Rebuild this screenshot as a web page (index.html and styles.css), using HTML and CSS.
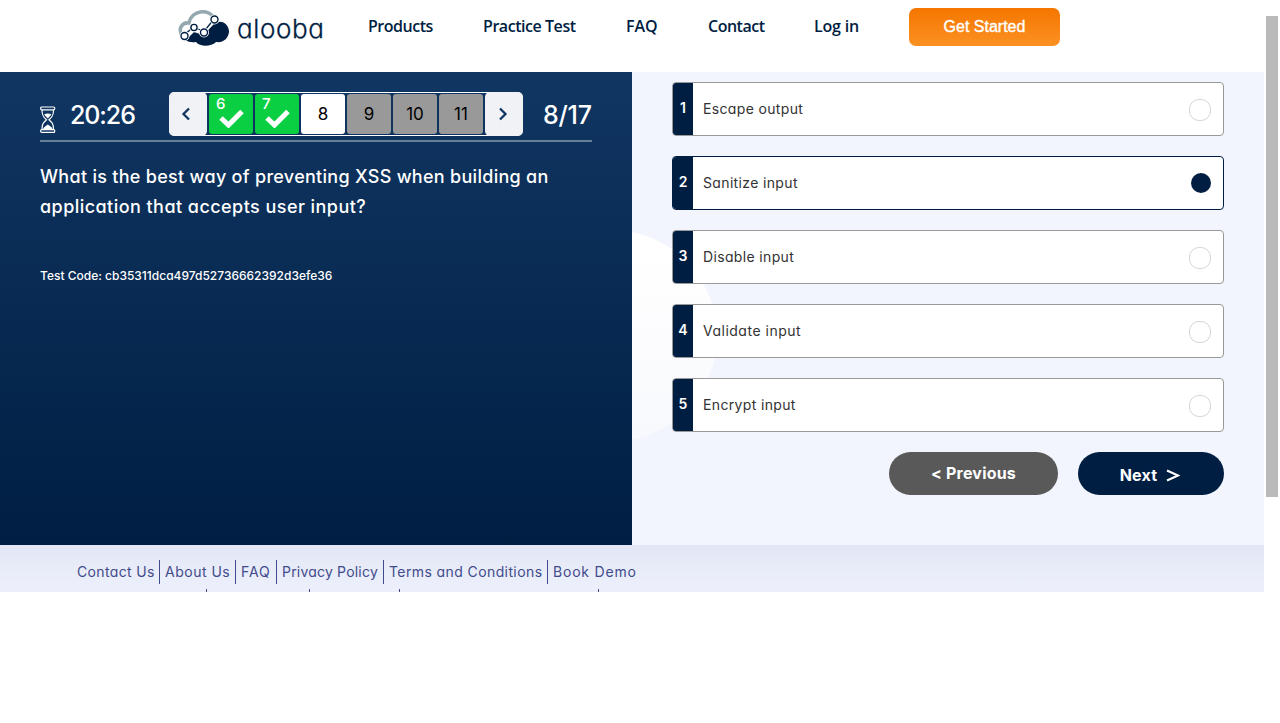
FILE: index.html
```html
<!DOCTYPE html>
<html lang="en">
<head>
<meta charset="utf-8">
<title>Alooba test</title>
<link rel="stylesheet" href="styles.css">
</head>
<body>
<div class="page">
  <header class="header">
    <a class="logo">
      <svg class="logo-mark" width="52" height="38" viewBox="0 0 52 38">
        <path d="M5 29C-1 21 4 14 11 15C13 3 30-1 37 11" fill="none" stroke="#93a8af" stroke-width="3.500"/>
        <path d="M9 31L16 24L25 27L35 17C42 10 51 15 51 24C50 31 45 35 38 34C33 39 22 39 18 34Q12 35 7 32Z" fill="#001e42"/>
        <path d="M6 27L15.500 19L26 23.500L36 11" fill="none" stroke="#fff" stroke-width="4.500"/>
        <path d="M6 27L15.500 19L26 23.500L36 11" fill="none" stroke="#001e42" stroke-width="1.300"/>
        <g fill="#fff" stroke="#fff" stroke-width="3"><circle cx="6.500" cy="28" r="3.500"/><circle cx="16" cy="19.500" r="3.300"/><circle cx="26" cy="24.500" r="3.500"/><circle cx="36.500" cy="11.500" r="3.500"/></g>
        <g fill="#fff" stroke="#001e42" stroke-width="1.400"><circle cx="6.500" cy="28" r="3.500"/><circle cx="16" cy="19.500" r="3.100"/><circle cx="26" cy="24.500" r="3.500"/><circle cx="36.500" cy="11.500" r="3.500"/></g>
      </svg>
      <span class="logo-name">alooba</span>
    </a>
    <nav class="nav">
      <a class="n1">Products</a><a class="n2">Practice Test</a><a class="n3">FAQ</a><a class="n4">Contact</a><a class="n5">Log in</a>
    </nav>
    <button class="cta">Get Started</button>
  </header>

  <main class="main">
    <section class="question-panel">
      <div class="toolbar">
        <svg class="hourglass" width="16" height="28" viewBox="0 0 16 28" fill="none" stroke="#fff" stroke-width="1.200">
          <rect x="0.700" y="1" width="14" height="2.800" rx="1"/><rect x="0.700" y="23.600" width="14" height="2.800" rx="1"/>
          <path d="M2 4C2 9 3 11 6.500 13.700C3 17 2 18 2 23.500M13.500 4C13.500 9 12.500 11 9 13.700C12.500 17 13.500 18 13.500 23.500"/>
          <path d="M4 8.500Q8 6.500 11.500 8.500L7.800 12.500ZM3 23C4 20.500 6 20 7.800 18.500C9.500 20 12 20.500 12.500 23Z" fill="#fff" stroke="none"/>
        </svg>
        <span class="timer">20:26</span>
        <div class="pager">
          <button class="arrow prev"><svg width="10" height="14" viewBox="0 0 10 14"><path d="M8 1.500L2.500 7L8 12.500"/></svg></button>
          <div class="step done"><span>6</span><svg width="25" height="19" viewBox="0 0 25 19"><path d="M2 9L9.500 16L23 2.500"/></svg></div>
          <div class="step done"><span>7</span><svg width="25" height="19" viewBox="0 0 25 19"><path d="M2 9L9.500 16L23 2.500"/></svg></div>
          <div class="step current">8</div>
          <div class="step">9</div>
          <div class="step">10</div>
          <div class="step">11</div>
          <button class="arrow"><svg width="10" height="14" viewBox="0 0 10 14"><path d="M2 1.500L7.500 7L2 12.500"/></svg></button>
        </div>
        <span class="progress">8/17</span>
      </div>
      <h1 class="question"><span class="q1">What is the best way of preventing XSS when building an</span><br><span class="q2">application that accepts user input?</span></h1>
      <p class="code">Test Code: cb35311dca497d52736662392d3efe36</p>
    </section>

    <section class="answers">
      <div class="option"><b>1</b><span class="label">Escape output</span><i class="radio"></i></div>
      <div class="option selected"><b>2</b><span class="label">Sanitize input</span><i class="radio"></i></div>
      <div class="option"><b>3</b><span class="label">Disable input</span><i class="radio"></i></div>
      <div class="option"><b>4</b><span class="label wide">Validate input</span><i class="radio"></i></div>
      <div class="option"><b>5</b><span class="label">Encrypt input</span><i class="radio"></i></div>
      <div class="actions">
        <button class="previous">&lt; Previous</button>
        <button class="next"><span>Next</span><svg width="14" height="13" viewBox="0 0 14 13"><path d="M1 1.500L12 6.500L1 11.500"/></svg></button>
      </div>
    </section>
  </main>

  <footer class="footer">
    <div class="links">
      <a class="f1">Contact Us</a><a class="f2">About Us</a><a class="f3">FAQ</a><a class="f4">Privacy Policy</a><a class="f5">Terms and Conditions</a><a class="f6">Book Demo</a>
    </div>
    <div class="links second"><a class="s1"></a><a class="s2"></a><a class="s3"></a><a class="s4"></a><a></a></div>
  </footer>
</div>
<div class="scrollbar"></div>
</body>
</html>
```
FILE: styles.css
```css
* { box-sizing: border-box; }
body { margin: 0; height: 723px; overflow: hidden; background: #fff; display: flex; font-family: Inter, sans-serif; font-feature-settings: "cv11"; }
button { border: 0; padding: 0; font: inherit; }
a, span { white-space: nowrap; }
.page { width: 1264px; flex: none; }
.scrollbar { width: 12px; height: 481px; margin: 16px 0 0 2px; background: #bababa; }

.header { height: 72px; padding: 8px 0 0 178px; display: flex; align-items: flex-start; color: #001e42; }
.logo { width: 190px; display: flex; }
.logo-name { margin-left: 7px; font-size: 26px; font-weight: 300; line-height: 42px; letter-spacing: 0.6px; -webkit-text-stroke: 0.3px #001e42; }
.nav { width: 541px; display: flex; font: 600 16px/37px "Open Sans", sans-serif; }
.n1 { width: 115px; letter-spacing: -0.48px; }
.n2 { width: 143px; letter-spacing: -0.45px; }
.n3 { width: 82px; }
.n4 { width: 106px; letter-spacing: -0.5px; }
.n5 { letter-spacing: -0.2px; }
.cta { width: 151px; height: 38px; border-radius: 7px; background: linear-gradient(#f57600, #fb9122); color: #fff; font: 16px "Liberation Sans", sans-serif; -webkit-text-stroke: 0.4px #fff; }

.main { height: 473px; display: flex; }
.question-panel { width: 632px; padding: 20px 40px 0; background: linear-gradient(#103662, #001e42); color: #fff; }
.toolbar { height: 50px; border-bottom: 2px solid #667f98; display: flex; align-items: flex-start; }
.toolbar > * { flex: none; }
.hourglass { margin-top: 14px; }
.timer { width: 99px; margin-left: 14px; font-size: 25px; font-weight: 500; line-height: 46px; letter-spacing: -1.1px; }
.pager { width: 354px; height: 44px; border: 1px solid #fff; border-radius: 6px; display: flex; gap: 2px; padding: 1px 0; }
.arrow { width: 38px; height: 44px; margin-top: -2px; padding-right: 2px; border-radius: 5px; background: #f0f2f5; display: grid; place-items: center; flex: none; }
.prev { margin-left: -1px; padding-right: 4px; }
.arrow svg { fill: none; stroke: #103662; stroke-width: 2.300; }
.step { width: 44px; height: 40px; flex: none; border-radius: 3px; background: #999; color: #000; font-size: 17px; line-height: 40px; text-align: center; }
.current { background: #fff; }
.done { background: #0acf43; color: #fff; display: grid; grid-template-rows: 15px 19px; text-align: left; }
.done span { padding-left: 7px; line-height: 20px; font-size: 15px; font-weight: 500; }
.done svg { margin-left: 10px; fill: none; stroke: #fff; stroke-width: 5; }
.progress { margin-left: 20px; font-size: 25px; font-weight: 500; line-height: 46px; letter-spacing: -0.2px; }
.question { margin: 20px 0 0; font-size: 18px; font-weight: 500; line-height: 30px; }
.q1 { letter-spacing: 0.29px; }
.q2 { letter-spacing: 0.45px; }
.code { margin: 44px 0 0; font-size: 12px; font-weight: 500; line-height: 20px; }

.answers { width: 632px; padding: 10px 40px 0; background: radial-gradient(circle at -21px 264px, transparent 105.500px, #f2f5fd 106.500px), linear-gradient(#fff 180px, #f8f9fd 370px); }
.option { height: 54px; margin-bottom: 20px; border: 1px solid #999; border-radius: 4px; background: #fff; display: flex; align-items: center; overflow: hidden; }
.option b { width: 20px; align-self: stretch; background: #001e42; color: #fff; font-size: 14px; font-weight: 600; line-height: 50px; text-align: center; }
.label { flex: 1; padding: 0 0 2px 10px; color: #333; font-size: 14px; letter-spacing: 0.35px; }
.wide { letter-spacing: 0.5px; }
.radio { width: 22px; height: 22px; margin: 2px 12px 0 0; border: 1px solid #d5d5d5; border-radius: 10px; }
.selected { border-color: #001e42; }
.selected .radio { width: 20px; height: 20px; margin-top: 0; background: #001e42; border: 0; }
.actions { display: flex; justify-content: flex-end; gap: 20px; }
.actions button { height: 43px; border-radius: 22px; color: #fff; font-size: 16px; font-weight: 700; letter-spacing: 0.2px; }
.actions .previous { width: 169px; padding-bottom: 2px; background: #595959; }
.actions .next { width: 146px; background: #001e42; display: flex; justify-content: center; align-items: center; gap: 9px; padding: 3px 2px 0 0; }
.next svg { fill: none; stroke: #fff; stroke-width: 2.200; }

.footer { height: 47px; overflow: hidden; padding: 15px 0 0 72px; background: linear-gradient(#e3e7f5, #edf0fc); font-size: 14px; color: #414b8c; }
.links { height: 24px; display: flex; line-height: 24px; }
.links a { padding-left: 5px; border-left: 1px solid #414b8c; }
.links a:first-child { border-left: 0; }
.f1 { width: 87px; letter-spacing: 0.35px; }
.f2 { width: 76px; letter-spacing: 0.5px; }
.f3 { width: 41px; letter-spacing: 0.9px; }
.f4 { width: 107px; letter-spacing: 0.2px; }
.f5 { width: 164px; letter-spacing: 0.4px; }
.f6 { letter-spacing: 0.8px; }
.second { margin-top: 5px; }
.s1 { width: 134px; }
.s2 { width: 103px; }
.s3 { width: 90px; }
.s4 { width: 199px; }
```
